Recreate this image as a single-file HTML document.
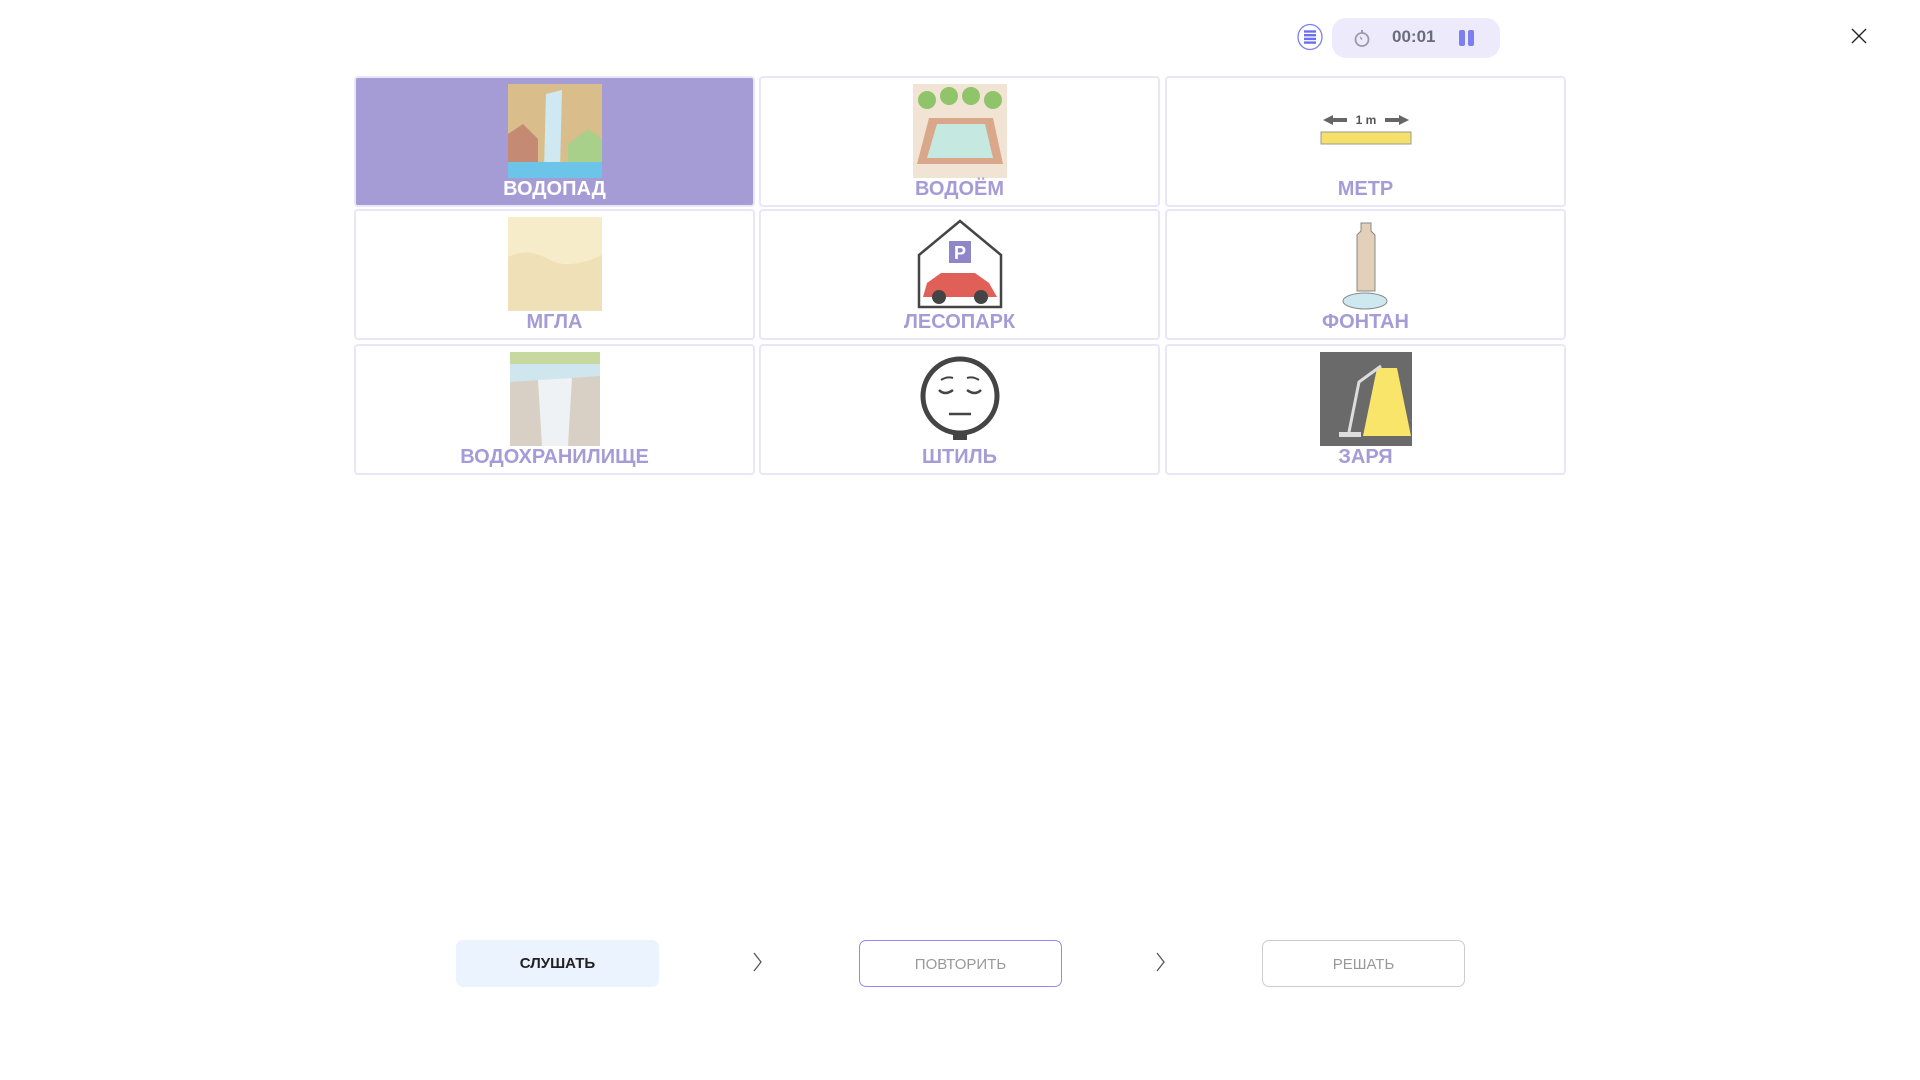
<!DOCTYPE html>
<html><head><meta charset="utf-8"><style>
*{margin:0;padding:0;box-sizing:border-box}
body{width:1920px;height:1080px;background:#fff;font-family:"Liberation Sans",sans-serif;position:relative;overflow:hidden}
.card{position:absolute;width:401px;height:131px;border:2px solid #e9e6f7;border-radius:4px;background:#fff}
.card.sel{background:#a59bd5;border-color:#e9e6f7}
.card .img{position:absolute;left:50%;top:6px;transform:translateX(-50%);width:94px;height:94px}
.card .lbl{position:absolute;left:0;right:0;top:100px;text-align:center;font-weight:bold;font-size:20px;color:#a59bd6}
.card.sel .lbl{color:#fff}
.btn{position:absolute;top:940px;width:203px;height:47px;border-radius:7px;font-size:15px;text-align:center;line-height:47px}
</style></head><body>
<!-- top bar -->
<svg style="position:absolute;left:1296px;top:23px" width="28" height="28" viewBox="0 0 28 28"><ellipse cx="14" cy="14" rx="12" ry="12.5" fill="#fff" stroke="#7b7ff0" stroke-width="1.3"/><g stroke="#6a6ff0" stroke-width="2.4"><line x1="8" y1="8.5" x2="20" y2="8.5"/><line x1="8" y1="12.2" x2="20" y2="12.2"/><line x1="8" y1="15.9" x2="20" y2="15.9"/><line x1="8" y1="19.6" x2="20" y2="19.6"/></g></svg>
<div style="position:absolute;left:1332px;top:18px;width:168px;height:40px;border-radius:14px;background:#edebfb"></div>
<svg style="position:absolute;left:1352px;top:27px" width="20" height="22" viewBox="0 0 20 22"><circle cx="10" cy="12.5" r="6.5" fill="none" stroke="#9a9aa8" stroke-width="1.8"/><line x1="10" y1="3" x2="10" y2="6" stroke="#9a9aa8" stroke-width="2"/><line x1="10" y1="12.5" x2="8" y2="10" stroke="#9a9aa8" stroke-width="1.4"/></svg>
<div style="position:absolute;left:1392px;top:27px;font-size:17px;font-weight:bold;color:#6b6b7a">00:01</div>
<div style="position:absolute;left:1459px;top:30px;width:6px;height:16px;border-radius:2px;background:#7b7ff0"></div>
<div style="position:absolute;left:1468px;top:30px;width:6px;height:16px;border-radius:2px;background:#7b7ff0"></div>
<svg style="position:absolute;left:1850px;top:27px" width="18" height="18"><path d="M2 2L16 16M16 2L2 16" stroke="#222" stroke-width="1.3"/></svg>

<!-- row1 -->
<div class="card sel" style="left:354px;top:76px"><svg class="img" viewBox="0 0 94 94"><rect x="0" y="0" width="94" height="94" fill="#d9bd8a"/><path d="M0 50 L15 40 L30 55 L30 94 L0 94Z" fill="#c48a73"/><path d="M60 60 L80 45 L94 55 L94 94 L60 94Z" fill="#a9d08a"/><path d="M38 10 L54 6 L52 85 L36 85Z" fill="#cfe9f3"/><rect x="0" y="78" width="94" height="16" fill="#6cc5e8"/></svg><div class="lbl">ВОДОПАД</div></div>
<div class="card" style="left:759px;top:76px"><svg class="img" viewBox="0 0 94 94"><rect width="94" height="94" fill="#f1e4d4"/><circle cx="14" cy="16" r="9" fill="#8fc46a"/><circle cx="36" cy="12" r="9" fill="#8fc46a"/><circle cx="58" cy="12" r="9" fill="#8fc46a"/><circle cx="80" cy="16" r="9" fill="#8fc46a"/><path d="M16 34 L80 34 L90 80 L4 80Z" fill="#d9a88a"/><path d="M24 40 L72 40 L80 74 L14 74Z" fill="#c5e8e0"/></svg><div class="lbl">ВОДОЁМ</div></div>
<div class="card" style="left:1165px;top:76px"><svg class="img" viewBox="0 0 94 94"><path d="M4 36 L14 31 L14 34 L28 34 L28 38 L14 38 L14 41Z" fill="#666"/><path d="M90 36 L80 31 L80 34 L66 34 L66 38 L80 38 L80 41Z" fill="#666"/><text x="47" y="40" font-size="12" font-weight="bold" text-anchor="middle" fill="#555" font-family="Liberation Sans">1 m</text><rect x="2" y="48" width="90" height="12" fill="#f5e06a" stroke="#999"/></svg><div class="lbl">МЕТР</div></div>
<!-- row2 -->
<div class="card" style="left:354px;top:209px"><svg class="img" viewBox="0 0 94 94"><rect width="94" height="94" fill="#f6ecca"/><path d="M0 40 Q20 30 40 42 T94 38 L94 94 L0 94Z" fill="#efe0b8"/></svg><div class="lbl">МГЛА</div></div>
<div class="card" style="left:759px;top:209px"><svg class="img" viewBox="0 0 94 94"><path d="M6 90 L6 38 L47 4 L88 38 L88 90Z" fill="#fff" stroke="#444" stroke-width="2.5"/><rect x="36" y="24" width="22" height="22" fill="#8e86c8"/><text x="47" y="42" font-size="18" font-weight="bold" text-anchor="middle" fill="#fff" font-family="Liberation Sans">P</text><path d="M10 80 L14 66 L28 56 L62 56 L76 66 L84 80Z" fill="#e06058"/><circle cx="26" cy="80" r="7" fill="#444"/><circle cx="68" cy="80" r="7" fill="#444"/></svg><div class="lbl">ЛЕСОПАРК</div></div>
<div class="card" style="left:1165px;top:209px"><svg class="img" viewBox="0 0 94 94"><path d="M42 6 L52 6 L52 14 L56 18 L56 74 L38 74 L38 18 L42 14Z" fill="#e2d0b8" stroke="#888"/><ellipse cx="46" cy="84" rx="22" ry="8" fill="#cde9ef" stroke="#888"/></svg><div class="lbl">ФОНТАН</div></div>
<!-- row3 -->
<div class="card" style="left:354px;top:344px"><svg class="img" viewBox="0 0 94 94"><rect x="2" y="0" width="90" height="94" fill="#cfe6ef"/><path d="M2 0 L92 0 L92 12 L2 12Z" fill="#c8d9a0"/><path d="M2 30 L92 24 L92 94 L2 94Z" fill="#d8d0c4"/><path d="M30 28 L64 26 L60 94 L34 94Z" fill="#eef2f4"/></svg><div class="lbl">ВОДОХРАНИЛИЩЕ</div></div>
<div class="card" style="left:759px;top:344px"><svg class="img" viewBox="0 0 94 94"><circle cx="47" cy="44" r="37" fill="#fff" stroke="#444" stroke-width="5"/><path d="M26 38 Q32 44 40 38 M54 38 Q62 44 68 38" fill="none" stroke="#444" stroke-width="2.5"/><path d="M28 28 Q34 24 40 26 M54 26 Q60 24 66 28" fill="none" stroke="#444" stroke-width="2"/><line x1="36" y1="62" x2="58" y2="62" stroke="#444" stroke-width="2.5"/><rect x="40" y="81" width="14" height="7" fill="#444"/></svg><div class="lbl">ШТИЛЬ</div></div>
<div class="card" style="left:1165px;top:344px"><svg class="img" viewBox="0 0 94 94"><rect x="1" y="0" width="92" height="94" fill="#6a6a6a"/><path d="M58 16 L78 16 L92 84 L44 84Z" fill="#f9e56a"/><path d="M30 80 L40 30 L62 14" fill="none" stroke="#ddd" stroke-width="3"/><rect x="20" y="80" width="22" height="5" fill="#ddd"/></svg><div class="lbl">ЗАРЯ</div></div>

<!-- bottom -->
<div class="btn" style="left:456px;background:#ebf3ff;font-weight:bold;color:#222">СЛУШАТЬ</div>
<svg style="position:absolute;left:750px;top:950px" width="16" height="24"><path d="M4 3 L11 12 L4 21" fill="none" stroke="#555" stroke-width="1.3"/></svg>
<div class="btn" style="left:859px;border:1.5px solid #9b86f0;color:#999">ПОВТОРИТЬ</div>
<svg style="position:absolute;left:1153px;top:950px" width="16" height="24"><path d="M4 3 L11 12 L4 21" fill="none" stroke="#555" stroke-width="1.3"/></svg>
<div class="btn" style="left:1262px;border:1.5px solid #ccc;color:#999">РЕШАТЬ</div>
</body></html>
